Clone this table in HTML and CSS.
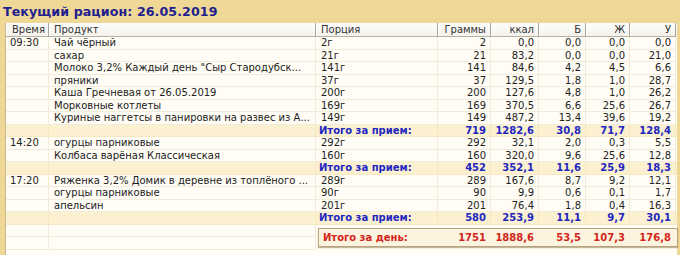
FILE: index.html
```html
<!DOCTYPE html>
<html lang="ru">
<head>
<meta charset="utf-8">
<title>Текущий рацион</title>
<link rel="stylesheet" href="styles.css">
</head>
<body>
<div class="page">
  <h1 class="title">Текущий рацион: 26.05.2019</h1>
  <div class="grid">
    <div class="row head">
      <div class="c">Время</div><div class="c">Продукт</div><div class="c">Порция</div>
      <div class="c n">Граммы</div><div class="c n">ккал</div><div class="c n">Б</div><div class="c n">Ж</div><div class="c n">У</div>
    </div>

    <div class="row"><div class="c">09:30</div><div class="c">Чай чёрный</div><div class="c">2г</div><div class="c n">2</div><div class="c n">0,0</div><div class="c n">0,0</div><div class="c n">0,0</div><div class="c n">0,0</div></div>
    <div class="row"><div class="c"></div><div class="c">сахар</div><div class="c">21г</div><div class="c n">21</div><div class="c n">83,2</div><div class="c n">0,0</div><div class="c n">0,0</div><div class="c n">21,0</div></div>
    <div class="row"><div class="c"></div><div class="c">Молоко 3,2% Каждый день "Сыр Стародубск...</div><div class="c">141г</div><div class="c n">141</div><div class="c n">84,6</div><div class="c n">4,2</div><div class="c n">4,5</div><div class="c n">6,6</div></div>
    <div class="row"><div class="c"></div><div class="c">пряники</div><div class="c">37г</div><div class="c n">37</div><div class="c n">129,5</div><div class="c n">1,8</div><div class="c n">1,0</div><div class="c n">28,7</div></div>
    <div class="row"><div class="c"></div><div class="c">Каша Гречневая от 26.05.2019</div><div class="c">200г</div><div class="c n">200</div><div class="c n">127,6</div><div class="c n">4,8</div><div class="c n">1,0</div><div class="c n">26,2</div></div>
    <div class="row"><div class="c"></div><div class="c">Морковные котлеты</div><div class="c">169г</div><div class="c n">169</div><div class="c n">370,5</div><div class="c n">6,6</div><div class="c n">25,6</div><div class="c n">26,7</div></div>
    <div class="row"><div class="c"></div><div class="c">Куриные наггетсы в панировки на развес из А...</div><div class="c">149г</div><div class="c n">149</div><div class="c n">487,2</div><div class="c n">13,4</div><div class="c n">39,6</div><div class="c n">19,2</div></div>
    <div class="row sum"><div class="c"></div><div class="c"></div><div class="c">Итого за прием:</div><div class="c n">719</div><div class="c n">1282,6</div><div class="c n">30,8</div><div class="c n">71,7</div><div class="c n">128,4</div></div>

    <div class="row"><div class="c">14:20</div><div class="c">огурцы парниковые</div><div class="c">292г</div><div class="c n">292</div><div class="c n">32,1</div><div class="c n">2,0</div><div class="c n">0,3</div><div class="c n">5,5</div></div>
    <div class="row"><div class="c"></div><div class="c">Колбаса варёная Классическая</div><div class="c">160г</div><div class="c n">160</div><div class="c n">320,0</div><div class="c n">9,6</div><div class="c n">25,6</div><div class="c n">12,8</div></div>
    <div class="row sum"><div class="c"></div><div class="c"></div><div class="c">Итого за прием:</div><div class="c n">452</div><div class="c n">352,1</div><div class="c n">11,6</div><div class="c n">25,9</div><div class="c n">18,3</div></div>

    <div class="row"><div class="c">17:20</div><div class="c">Ряженка 3,2% Домик в деревне из топлёного ...</div><div class="c">289г</div><div class="c n">289</div><div class="c n">167,6</div><div class="c n">8,7</div><div class="c n">9,2</div><div class="c n">12,1</div></div>
    <div class="row"><div class="c"></div><div class="c">огурцы парниковые</div><div class="c">90г</div><div class="c n">90</div><div class="c n">9,9</div><div class="c n">0,6</div><div class="c n">0,1</div><div class="c n">1,7</div></div>
    <div class="row"><div class="c"></div><div class="c">апельсин</div><div class="c">201г</div><div class="c n">201</div><div class="c n">76,4</div><div class="c n">1,8</div><div class="c n">0,4</div><div class="c n">16,3</div></div>
    <div class="row sum"><div class="c"></div><div class="c"></div><div class="c">Итого за прием:</div><div class="c n">580</div><div class="c n">253,9</div><div class="c n">11,1</div><div class="c n">9,7</div><div class="c n">30,1</div></div>

    <div class="foot">
      <div class="foot-left">
        <div class="row blank"><div class="c"></div><div class="c"></div></div>
        <div class="row blank"><div class="c"></div><div class="c"></div></div>
      </div>
      <div class="foot-right">
        <div class="day">
          <div class="c">Итого за день:</div><div class="c n">1751</div><div class="c n">1888,6</div><div class="c n">53,5</div><div class="c n">107,3</div><div class="c n">176,8</div>
        </div>
      </div>
    </div>
  </div>
</div>
</body>
</html>
```

FILE: styles.css
```css
* { box-sizing: border-box; }
html, body { margin: 0; padding: 0; }
body {
  background: #efd796;
  font-family: "DejaVu Sans", Tahoma, sans-serif;
  font-size: 10px;
  color: #222;
  width: 680px;
  height: 255px;
  overflow: hidden;
}
.page { padding: 0 3px 0 5px; }
.title {
  margin: 0 0 0 -2px;
  height: 23px;
  padding: 5px 0 0 0;
  font-size: 12.6px;
  line-height: 14px;
  font-weight: bold;
  color: #22208e;
  letter-spacing: 0.1px;
}
.grid {
  background: #fffdf5;
  border-left: 1px solid #c9b98f;
  width: 672px;
  height: 232px;
}
.row {
  display: grid;
  grid-template-columns: 43px 267px 122px 53px 48px 47px 44px 46px;
  height: 12.5px;
}
.c {
  padding: 0 4px 0 5px;
  line-height: 12px;
  white-space: nowrap;
  overflow: hidden;
  border-right: 1px solid #f1ebd9;
  border-bottom: 1px solid #f1ebd9;
}
.c.n { text-align: right; padding: 0 4px 0 0; }
.row > .c:first-child { padding-left: 4px; }
.head { height: 14px; background: linear-gradient(#fdfdfb, #f3f1ea); }
.head .c {
  line-height: 14px;
  border-right: 1px solid #a9a59a;
  border-bottom: 1px solid #b5b0a2;
  box-shadow: inset 1px 0 0 #ffffff;
  color: #333;
}
.head .c:first-child { padding-left: 6px; }
.sum { background: #fbf0cf; }
.sum .c { border-color: #f6e8bf; color: #2226c0; font-weight: bold; }
.sum .c:nth-child(3) { padding-left: 3px; }
.foot { display: flex; }
.foot-left .row { grid-template-columns: 43px 267px; }
.foot-right { width: 362px; padding: 3.5px 0 0 2px; }
.day {
  display: grid;
  grid-template-columns: 118px 53px 48px 47px 44px 46px;
  height: 19px;
  width: 360px;
  background: #fdf4df;
  border: 1px solid #b9a27e;
  box-shadow: 0 1px 1px rgba(120, 90, 50, 0.45);
}
.day .c {
  border: none;
  line-height: 17px;
  color: #d3251c;
  font-weight: bold;
  padding-left: 4px;
}
.day .c.n { padding-right: 4px; }
```
